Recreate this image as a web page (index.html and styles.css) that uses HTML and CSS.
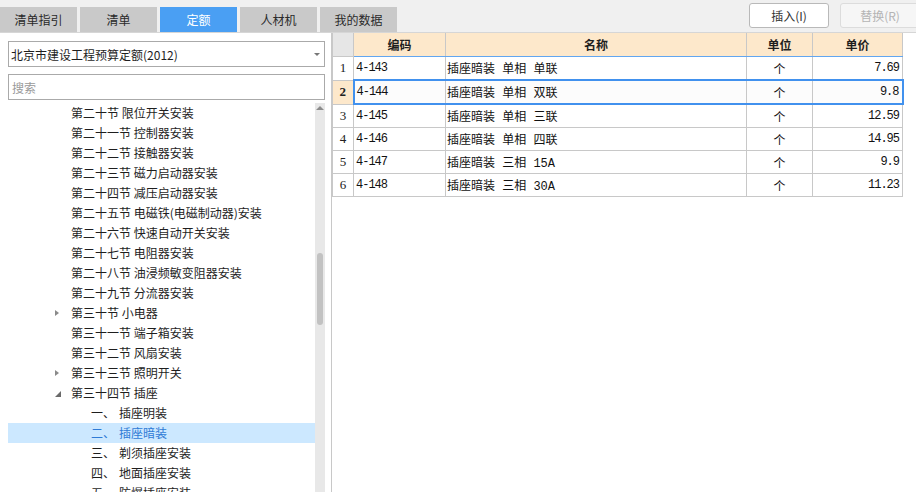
FILE: index.html
```html
<!DOCTYPE html>
<html lang="zh">
<head>
<meta charset="utf-8">
<title>定额</title>
<link rel="stylesheet" href="styles.css">
</head>
<body>
<div class="app">
  <div class="topbar">
    <div class="tabs">
      <div class="tab">清单指引</div>
      <div class="tab">清单</div>
      <div class="tab active">定额</div>
      <div class="tab">人材机</div>
      <div class="tab">我的数据</div>
    </div>
    <div class="actions">
      <div class="btn">插入(I)</div>
      <div class="btn disabled">替换(R)</div>
    </div>
  </div>
  <div class="main">
    <div class="left">
      <div class="select">
        <span>北京市建设工程预算定额(2012)</span>
        <span class="caret"></span>
      </div>
      <div class="search">搜索</div>
      <div class="tree">
        <div class="tree-list">
          <div class="node l1">第二十节 限位开关安装</div>
          <div class="node l1">第二十一节 控制器安装</div>
          <div class="node l1">第二十二节 接触器安装</div>
          <div class="node l1">第二十三节 磁力启动器安装</div>
          <div class="node l1">第二十四节 减压启动器安装</div>
          <div class="node l1">第二十五节 电磁铁(电磁制动器)安装</div>
          <div class="node l1">第二十六节 快速自动开关安装</div>
          <div class="node l1">第二十七节 电阻器安装</div>
          <div class="node l1">第二十八节 油浸频敏变阻器安装</div>
          <div class="node l1">第二十九节 分流器安装</div>
          <div class="node l1"><span class="tw closed"></span>第三十节 小电器</div>
          <div class="node l1">第三十一节 端子箱安装</div>
          <div class="node l1">第三十二节 风扇安装</div>
          <div class="node l1"><span class="tw closed"></span>第三十三节 照明开关</div>
          <div class="node l1"><span class="tw open"></span>第三十四节 插座</div>
          <div class="node l2"><span class="num">一、</span>插座明装</div>
          <div class="node l2 selected"><span class="num">二、</span>插座暗装</div>
          <div class="node l2"><span class="num">三、</span>剃须插座安装</div>
          <div class="node l2"><span class="num">四、</span>地面插座安装</div>
          <div class="node l2"><span class="num">五、</span>防爆插座安装</div>
        </div>
        <div class="scrollbar">
          <span class="up"></span>
          <span class="thumb"></span>
        </div>
      </div>
    </div>
    <div class="right">
      <table class="grid">
        <colgroup>
          <col class="c-no"><col class="c-code"><col class="c-name"><col class="c-unit"><col class="c-price">
        </colgroup>
        <thead>
          <tr><th class="corner"></th><th>编码</th><th>名称</th><th>单位</th><th>单价</th></tr>
        </thead>
        <tbody>
          <tr><td class="no">1</td><td class="code">4-143</td><td class="name">插座暗装 单相 单联</td><td class="unit">个</td><td class="price">7.69</td></tr>
          <tr class="sel"><td class="no">2</td><td class="code">4-144</td><td class="name">插座暗装 单相 双联</td><td class="unit">个</td><td class="price">9.8</td></tr>
          <tr><td class="no">3</td><td class="code">4-145</td><td class="name">插座暗装 单相 三联</td><td class="unit">个</td><td class="price">12.59</td></tr>
          <tr><td class="no">4</td><td class="code">4-146</td><td class="name">插座暗装 单相 四联</td><td class="unit">个</td><td class="price">14.95</td></tr>
          <tr><td class="no">5</td><td class="code">4-147</td><td class="name">插座暗装 三相 15A</td><td class="unit">个</td><td class="price">9.9</td></tr>
          <tr><td class="no">6</td><td class="code">4-148</td><td class="name">插座暗装 三相 30A</td><td class="unit">个</td><td class="price">11.23</td></tr>
        </tbody>
      </table>
    </div>
  </div>
</div>
</body>
</html>
```

FILE: styles.css
```css
html, body {
  margin: 0;
  padding: 0;
  overflow: hidden;
}
body {
  width: 916px;
  height: 492px;
  background: #f0f0f0;
  font-family: "Noto Sans CJK SC", "Microsoft YaHei", sans-serif;
  font-size: 12px;
  color: #1e1e1e;
}
.app {
  display: flex;
  flex-direction: column;
  height: 492px;
}
.topbar {
  height: 32px;
  border-bottom: 1px solid #d6d6d6;
  display: flex;
  justify-content: space-between;
  overflow: hidden;
  flex: none;
}
.tabs {
  display: flex;
  gap: 3px;
  padding-top: 7px;
}
.tab {
  width: 77px;
  height: 25px;
  line-height: 25px;
  text-align: center;
  background: #c9c9c9;
  color: #2a2a2a;
  font-size: 12px;
}
.tab.active {
  background: #4a9ff3;
  color: #ffffff;
}
.actions {
  display: flex;
  gap: 11px;
  padding-top: 3px;
  margin-right: -4px;
}
.btn {
  width: 78px;
  height: 23px;
  line-height: 23px;
  text-align: center;
  background: #ffffff;
  border: 1px solid #b9b9b9;
  border-radius: 3px;
  color: #333333;
  font-size: 12px;
}
.btn.disabled {
  background: #f6f6f6;
  border-color: #dcdcdc;
  color: #b4b4b4;
}
.main {
  display: flex;
  flex: 1;
  min-height: 0;
}
.left {
  width: 332px;
  background: #ffffff;
  border-right: 1px solid #c8c8c8;
  display: flex;
  flex-direction: column;
  padding: 8px 6px 0 8px;
  box-sizing: border-box;
  flex: none;
}
.select, .search {
  height: 26px;
  box-sizing: border-box;
  border: 1px solid #aaaaaa;
  background: #ffffff;
  display: flex;
  align-items: center;
  padding: 0 0 0 2px;
  flex: none;
}
.select {
  justify-content: space-between;
  color: #1e1e1e;
}
.caret {
  width: 0;
  height: 0;
  border-left: 3px solid transparent;
  border-right: 3px solid transparent;
  border-top: 3px solid #777777;
  margin-right: 4px;
}
.search {
  margin-top: 7px;
  color: #9a9a9a;
  padding-left: 3px;
}
.tree {
  margin-top: 3px;
  display: flex;
  flex: 1;
  min-height: 0;
}
.tree-list {
  flex: 1;
  overflow: hidden;
}
.node {
  height: 20px;
  line-height: 20px;
  white-space: nowrap;
  display: flex;
  align-items: center;
  color: #1e1e1e;
}
.node.l1 {
  padding-left: 63px;
}
.node.l2 {
  padding-left: 83px;
}
.node.selected {
  background: #cce8ff;
  color: #2f7bd6;
}
.num {
  display: inline-block;
  width: 28px;
}
.tw {
  width: 16px;
  height: 20px;
  margin-left: -16px;
  position: relative;
  flex: none;
}
.tw.closed::before {
  content: "";
  position: absolute;
  left: 0;
  top: 7px;
  border-top: 3.5px solid transparent;
  border-bottom: 3.5px solid transparent;
  border-left: 4px solid #8a8a8a;
}
.tw.open::before {
  content: "";
  position: absolute;
  left: 0;
  top: 8px;
  border-left: 6px solid transparent;
  border-bottom: 6px solid #6a6a6a;
}
.scrollbar {
  width: 10px;
  background: #e8e8e8;
  position: relative;
  flex: none;
}
.up {
  position: absolute;
  left: 1px;
  top: 3px;
  border-left: 4px solid transparent;
  border-right: 4px solid transparent;
  border-bottom: 4px solid #8c8c8c;
}
.thumb {
  position: absolute;
  left: 2px;
  top: 150px;
  width: 6px;
  height: 72px;
  border-radius: 3px;
  background: #c2c2c2;
}
.right {
  flex: 1;
  background: #ffffff;
  overflow: hidden;
}
.grid {
  border-collapse: collapse;
  table-layout: fixed;
  width: 571px;
  font-size: 12px;
}
.c-no { width: 21px; }
.c-code { width: 92px; }
.c-name { width: 301px; }
.c-unit { width: 66px; }
.c-price { width: 90px; }
.grid th {
  height: 23px;
  padding: 0;
  background: #fde8cb;
  border: 1px solid #c8c8c8;
  border-top: none;
  border-bottom: 1px solid #62a6f0;
  font-weight: bold;
  color: #1e1e1e;
  text-align: center;
}
.grid th.corner {
  background: #e6e6e6;
  border-bottom: 1px solid #c8c8c8;
}
.grid td {
  height: 22px;
  padding: 0;
  border: 1px solid #c8c8c8;
  white-space: nowrap;
  color: #111111;
}
.grid td.no {
  text-align: center;
  font-family: "Liberation Serif", serif;
  font-size: 13px;
  color: #222222;
}
.grid td.code {
  padding-left: 2px;
  font-family: "Liberation Mono", monospace;
  font-size: 12px;
  letter-spacing: -1px;
}
.grid td.name {
  padding-left: 1px;
  font-family: "Liberation Mono", "Noto Sans CJK SC", monospace;
}
.grid td.unit {
  text-align: center;
}
.grid td.price {
  text-align: right;
  padding-right: 3px;
  font-family: "Liberation Mono", monospace;
  font-size: 12px;
  letter-spacing: -1px;
}
.grid tr.sel td {
  background: #fcfcfc;
  border-top: 2px solid #4191ee;
  border-bottom: 2px solid #4191ee;
}
.grid tr.sel td.no {
  background: #fde8cb;
  font-weight: bold;
  border-top: 1px solid #c8c8c8;
  border-bottom: 1px solid #c8c8c8;
  border-right: 2px solid #4191ee;
}
.grid tr.sel td.price {
  border-right: 2px solid #4191ee;
}
```
